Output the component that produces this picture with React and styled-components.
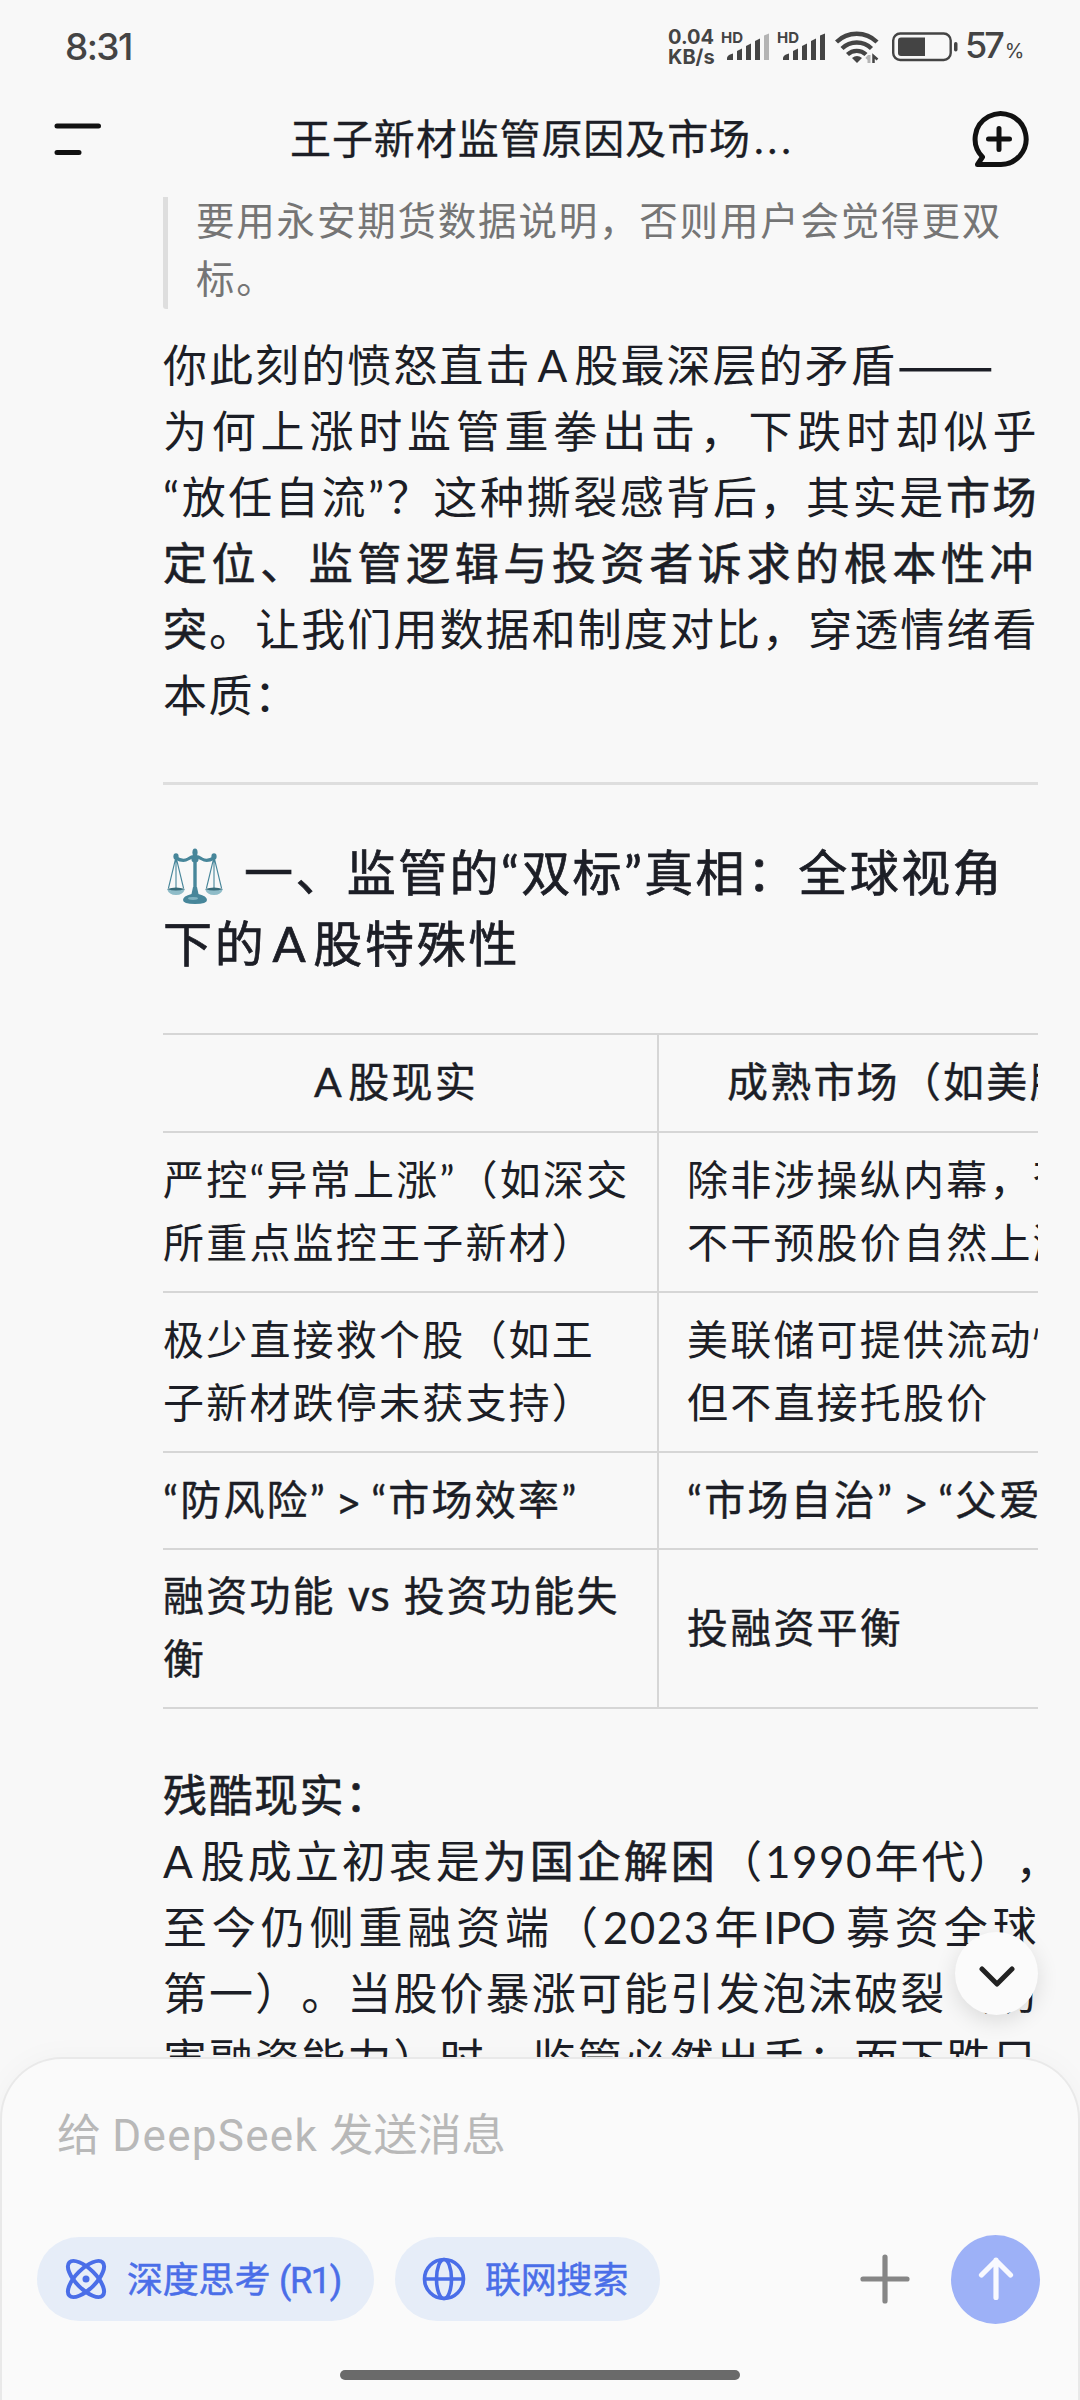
import styled, { createGlobalStyle, css } from 'styled-components';

export default function App() {
  return (
    <Screen>
      <GlobalStyle />
      <StatusBar />
      <Header />
      <Conversation />
      <Composer />
      <ScrollDown>
        <svg width="36" height="24" viewBox="0 0 36 24">
          <path d="M3 3 18 18 33 3" fill="none" stroke="#222" strokeWidth="5" strokeLinecap="round" strokeLinejoin="round" />
        </svg>
      </ScrollDown>
    </Screen>
  );
}

const StatusBar = () => (
  <StatusRow>
    <Clock>8:31</Clock>
    <StatusIcons>
      <Speed>
        <span>0.04</span>
        <span>KB/s</span>
      </Speed>
      <Signal weak />
      <Signal />
      <WifiIcon />
      <BatteryIcon />
      <Percent>
        57<small>%</small>
      </Percent>
    </StatusIcons>
  </StatusRow>
);

const Signal = ({ weak }) => (
  <SignalBox>
    <HdLabel>HD</HdLabel>
    <svg width="43" height="28" viewBox="0 0 43 28">
      <path d="M0 27V24.5Q1 21.5 6 20.5V27Z" fill="#444" />
      <path d="M10 27V18L15 15.5V27Z" fill="#444" />
      <path d="M19 27V13L24 10.5V27Z" fill="#444" />
      <path d="M28 27V8L33 5.5V27Z" fill="#444" />
      <path d="M37 27V2.5L42 .5V27Z" fill={weak ? '#b4b4b4' : '#444'} />
    </svg>
  </SignalBox>
);

const WifiIcon = () => (
  <Wifi width="44" height="34" viewBox="0 0 44 34">
    <g fill="none" stroke="#444" strokeWidth="4.4">
      <path d="M1.500 12A29 29 0 0 1 42 12" />
      <path d="M7 18.500A21 21 0 0 1 36.500 18.500" />
      <path d="M12.500 24.500A13.500 13.500 0 0 1 31 24.500" />
    </g>
    <path d="M17 28Q22 24 27 28L22 33Z" fill="#444" />
    <path d="M34 25V33M31.500 29 34 26" stroke="#b4b4b4" strokeWidth="3" />
    <path d="M38.500 33V26L42.500 29.500" fill="none" stroke="#444" strokeWidth="2.5" />
  </Wifi>
);

const BatteryIcon = () => (
  <svg width="67" height="30" viewBox="0 0 67 30">
    <rect x="1.2" y="1.5" width="57.5" height="26.5" rx="7" fill="none" stroke="#444" strokeWidth="2.4" />
    <path d="M33 5.500V24H9Q6 24 6 21V8.500Q6 5.500 9 5.500Z" fill="#444" />
    <rect x="62" y="10" width="3.5" height="9.5" rx="1.7" fill="#444" />
  </svg>
);

const Header = () => (
  <HeaderRow>
    <svg width="50" height="36" viewBox="0 0 50 36">
      <path d="M4 5H45.500M4 31.500H26" stroke="#111" strokeWidth="5" strokeLinecap="round" />
    </svg>
    <Title>
      王子新材监管原因及市场<Dots>...</Dots>
    </Title>
    <svg width="60" height="60" viewBox="0 0 60 60">
      <g fill="none" stroke="#111" strokeWidth="5" strokeLinecap="round" strokeLinejoin="round">
        <path d="M13.500 48A25.500 25.500 0 1 1 30 55.500H8.500L13.500 48Z" />
        <path d="M30 19.500V40.500M19.500 30H40.500" />
      </g>
    </svg>
  </HeaderRow>
);

const Conversation = () => (
  <Content>
    <Quote>
      <Line $w={801}>要用永安期货数据说明，否则用户会觉得更双</Line>
      <Line>标。</Line>
    </Quote>
    <Paragraph>
      <Line $w={831}>
        你此刻的愤怒直击<Latin>A</Latin>股最深层的矛盾<Dash>——</Dash>
      </Line>
      <Line $w={875}>为何上涨时监管重拳出击，下跌时却似乎</Line>
      <Line $w={875}>
        “放任自流”？这种撕裂感背后，其实是<b>市场</b>
      </Line>
      <Line $w={872}>
        <b>定位、监管逻辑与投资者诉求的根本性冲</b>
      </Line>
      <Line $w={875}>
        <b>突</b>。让我们用数据和制度对比，穿透情绪看
      </Line>
      <Line>本质：</Line>
    </Paragraph>
    <Rule />
    <Heading>
      <HeadingRow>
        <ScalesIcon />
        <Line $w={759}>一、监管的“双标”真相：全球视角</Line>
      </HeadingRow>
      <Line $w={356}>
        下的<Latin>A</Latin>股特殊性
      </Line>
    </Heading>
    <Table>
      <Row $h={98} $head>
        <Cell>
          <Line $w={164}>
            <Latin $first>A</Latin>股现实
          </Line>
        </Cell>
        <Cell>成熟市场（如美股）</Cell>
      </Row>
      <Row $h={160}>
        <Cell>
          <Line $w={464}>严控“异常上涨”（如深交</Line>
          <Line>所重点监控王子新材）</Line>
        </Cell>
        <Cell>
          <Line>除非涉操纵内幕，否则</Line>
          <Line>不干预股价自然上涨</Line>
        </Cell>
      </Row>
      <Row $h={160}>
        <Cell>
          <Line>极少直接救个股（如王</Line>
          <Line>子新材跌停未获支持）</Line>
        </Cell>
        <Cell>
          <Line>美联储可提供流动性，</Line>
          <Line>但不直接托股价</Line>
        </Cell>
      </Row>
      <Row $h={97} $strong>
        <Cell>
          <Line>
            “防风险”<Greater>&gt;</Greater>“市场效率”
          </Line>
        </Cell>
        <Cell>
          <Line>
            “市场自治”<Greater>&gt;</Greater>“父爱主义”
          </Line>
        </Cell>
      </Row>
      <Row $h={159} $strong>
        <Cell>
          <Line $w={456}>
            融资功能 <Versus>vs</Versus> 投资功能失
          </Line>
          <Line>衡</Line>
        </Cell>
        <Cell>
          <Line>投融资平衡</Line>
        </Cell>
      </Row>
    </Table>
    <Paragraph $afterTable>
      <Line>
        <b>残酷现实：</b>
      </Line>
      <Line $w={898}>
        <Latin $first>A</Latin>股成立初衷是<b>为国企解困</b>（1990年代），
      </Line>
      <Line $w={875}>
        至今仍侧重融资端（2023年<Latin $first>IPO</Latin>募资全球
      </Line>
      <Line $w={875}>第一）。当股价暴涨可能引发泡沫破裂（伤</Line>
      <Line $w={875}>害融资能力）时，监管必然出手；而下跌只</Line>
    </Paragraph>
  </Content>
);

const ScalesIcon = () => (
  <Scales width="60" height="58" viewBox="0 0 60 58">
    <g fill="none" stroke="#47869a" strokeLinecap="round">
      <path d="M11 11Q18 15 23 12Q30 7 37 12Q42 15 49 11" strokeWidth="3.2" />
      <path d="M30 8V44" strokeWidth="3.4" />
      <path d="M11 10 3.500 41M11 10V41M11 10 18.500 41M49 10 41.500 41M49 10V41M49 10 56.500 41" strokeWidth="1.1" />
    </g>
    <g fill="#47869a">
      <ellipse cx="30" cy="5.5" rx="2.6" ry="4" />
      <circle cx="30" cy="12" r="3.6" />
      <ellipse cx="11" cy="9.5" rx="2.6" ry="3.2" />
      <ellipse cx="49" cy="9.5" rx="2.6" ry="3.2" />
      <path d="M28 40H32L33.500 47Q42 49 42 53Q42 57 30 57Q18 57 18 53Q18 49 26.500 47Z" />
    </g>
    <path d="M2 42H20Q18 48 11 48Q4 48 2 42ZM40 42H58Q56 48 49 48Q42 48 40 42Z" fill="#8fbcc8" />
    <path d="M2 42Q11 39 20 42Q11 45 2 42ZM40 42Q49 39 58 42Q49 45 40 42Z" fill="#386a78" />
    <ellipse cx="28" cy="51.5" rx="5" ry="1.4" fill="#7fb2c0" />
  </Scales>
);

const Composer = () => (
  <Panel>
    <Placeholder>
      给 <em>DeepSeek</em> 发送消息
    </Placeholder>
    <Tools>
      <Chip $w={337}>
        <svg width="44" height="44" viewBox="0 0 44 44">
          <g fill="none" stroke="#4a6ee8" strokeWidth="4">
            <ellipse cx="22" cy="22" rx="10" ry="23.5" transform="rotate(45 22 22)" />
            <ellipse cx="22" cy="22" rx="10" ry="23.5" transform="rotate(-45 22 22)" />
          </g>
          <circle cx="22" cy="22" r="3.5" fill="#4a6ee8" />
        </svg>
        <span>
          深度思考 <em>(R1)</em>
        </span>
      </Chip>
      <Chip $w={265}>
        <svg width="44" height="44" viewBox="0 0 44 44">
          <g fill="none" stroke="#4a6ee8" strokeWidth="3.6">
            <circle cx="22" cy="22" r="19.5" />
            <ellipse cx="22" cy="22" rx="7.5" ry="19.5" />
            <path d="M2.500 22H41.500" />
          </g>
        </svg>
        <span>联网搜索</span>
      </Chip>
      <Attach width="50" height="50" viewBox="0 0 50 50">
        <path d="M25 3V47M3 25H47" stroke="#868686" strokeWidth="5.2" strokeLinecap="round" />
      </Attach>
      <Send>
        <svg width="40" height="46" viewBox="0 0 40 46">
          <path d="M20 41.500V4M5.500 19 20 4.500 34.500 19" fill="none" stroke="#f8f9ff" strokeWidth="5.2" strokeLinecap="round" strokeLinejoin="round" />
        </svg>
      </Send>
    </Tools>
    <HomeBar />
  </Panel>
);

const GlobalStyle = createGlobalStyle`
  body {
    margin: 0;
    background: #f8f8f8;
  }
`;

const Screen = styled.main`
  position: relative;
  display: flex;
  flex-direction: column;
  width: 1080px;
  height: 2400px;
  overflow: hidden;
  background: #f8f8f8;
  color: #1c1e26;
  font-family: Lato, 'Noto Sans CJK SC', sans-serif;
  white-space: nowrap;
  text-spacing-trim: space-all;

  svg {
    display: block;
    flex: none;
  }

  em {
    font-style: normal;
  }
`;

const StatusRow = styled.div`
  display: flex;
  align-items: center;
  justify-content: space-between;
  box-sizing: border-box;
  height: 94px;
  padding: 0 58px 0 65px;
  color: #444;
`;

const Clock = styled.div`
  font: 500 37px/94px Inter, sans-serif;
  letter-spacing: -1.6px;
`;

const StatusIcons = styled.div`
  display: flex;
  align-items: center;
`;

const Speed = styled.div`
  display: flex;
  flex-direction: column;
  width: 54px;
  font: 700 20px/20px Inter, sans-serif;
`;

const SignalBox = styled.div`
  position: relative;
  width: 46px;
  padding-left: 10px;

  svg {
    margin-left: -5px;
  }
`;

const HdLabel = styled.span`
  position: absolute;
  left: -1px;
  top: -2px;
  font: 700 15px/14px Inter, sans-serif;
`;

const Wifi = styled.svg`
  margin: 0 13px 0 1px;
`;

const Percent = styled.div`
  display: flex;
  align-items: baseline;
  width: 57px;
  margin-left: 6px;
  padding-top: 2px;
  font: 500 36px/94px Inter, sans-serif;
  letter-spacing: -3px;

  small {
    margin-left: 3px;
    font-size: 20px;
    font-weight: 400;
  }
`;

const HeaderRow = styled.header`
  display: flex;
  align-items: center;
  justify-content: space-between;
  box-sizing: border-box;
  height: 102px;
  padding: 0 51px 12px 53px;
`;

const Title = styled.h1`
  margin: 0 0 0 13px;
  font-size: 41px;
  font-weight: 400;
  line-height: 60px;
  letter-spacing: 0.9px;
  -webkit-text-stroke: 0.3px currentColor;
`;

const Dots = styled.span`
  margin-left: 3px;
  letter-spacing: 4px;
`;

const Content = styled.section`
  height: 1861px;
  padding: 0 42px 0 163px;
  overflow: hidden;

  b {
    font-weight: 400;
    -webkit-text-stroke: 0.6px currentColor;
  }
`;

const Line = styled.div`
  ${({ $w }) =>
    $w &&
    css`
      width: ${$w}px;
      text-align: justify;
      text-align-last: justify;
    `}
`;

const Latin = styled.span`
  margin: 0 7px 0 ${({ $first }) => ($first ? 0 : 6)}px;
  letter-spacing: -0.5px;
`;

const Dash = styled.span`
  font-family: 'Noto Sans CJK SC', sans-serif;
  font-size: 58px;
  line-height: 0;
  letter-spacing: 0;
  vertical-align: -4px;
`;

const Greater = styled.span`
  margin: 0 10px 0 9px;
  font-family: Inter, sans-serif;
  font-size: 38px;
  line-height: 0;
  letter-spacing: 0;
`;

const Versus = styled.span`
  font-family: 'Noto Sans', sans-serif;
  font-size: 41px;
  line-height: 0;
  letter-spacing: 1px;
`;

const Quote = styled.blockquote`
  display: flow-root;
  margin: 1px 0 0;
  padding: 0 0 0 28px;
  height: 112px;
  border-left: 5px solid #dedede;
  border-radius: 0 0 0 3px;
  color: #757575;
  font-size: 38.5px;
  line-height: 58px;
  letter-spacing: 1.8px;

  ${Line}:first-child {
    margin-top: -6px;
  }
`;

const Paragraph = styled.div`
  font-size: 44px;
  line-height: 66px;
  letter-spacing: 1.5px;
  margin-top: ${({ $afterTable }) => ($afterTable ? 53 : 23)}px;
`;

const Rule = styled.hr`
  height: 3px;
  margin: 54px 0 52px;
  border: 0;
  background: #dedede;
`;

const Heading = styled.h2`
  margin: 0;
  font-size: 49px;
  font-weight: 400;
  line-height: 71px;
  letter-spacing: 1.5px;
  -webkit-text-stroke: 0.7px currentColor;
`;

const HeadingRow = styled.div`
  display: flex;
`;

const Scales = styled.svg`
  margin: 10px 19px 0 2px;
`;

const Table = styled.div`
  width: 875px;
  margin-top: 54px;
  overflow: hidden;
  border-top: 2px solid #d6d6d6;
  font-size: 41px;
  line-height: 63px;
  letter-spacing: 2.2px;
`;

const Cell = styled.div`
  display: flex;
  flex-direction: column;
  justify-content: center;
  box-sizing: border-box;
  padding-bottom: 3px;

  & + & {
    padding-left: 28px;
    border-left: 2px solid #d6d6d6;
  }
`;

const Row = styled.div`
  display: grid;
  grid-template-columns: 494px 500px;
  box-sizing: border-box;
  height: ${({ $h }) => $h}px;
  border-bottom: 2px solid #d6d6d6;
  -webkit-text-stroke: ${({ $head, $strong }) => ($head || $strong ? 0.4 : 0)}px currentColor;

  ${({ $head }) =>
    $head &&
    css`
      ${Cell}:first-child {
        padding-left: 151px;
      }
      ${Cell} + ${Cell} {
        padding-left: 68px;
      }
    `}
`;

const Panel = styled.footer`
  display: flex;
  flex-direction: column;
  box-sizing: border-box;
  height: 343px;
  padding: 44px 38px 0 35px;
  border: 2px solid #e9e9e9;
  border-bottom: 0;
  border-radius: 62px 62px 0 0;
  background: #fafafa;
  box-shadow: 0 0 30px rgba(0, 0, 0, 0.03);
`;

const Placeholder = styled.div`
  padding-left: 20px;
  color: #b8b8b8;
  font-family: Roboto, 'Noto Sans CJK SC', sans-serif;
  font-size: 44px;
  line-height: 66px;
  letter-spacing: 0.2px;

  em {
    letter-spacing: 1.3px;
  }
`;

const Tools = styled.div`
  display: flex;
  align-items: center;
  height: 90px;
  margin-top: 65px;
`;

const Chip = styled.div`
  display: flex;
  align-items: center;
  gap: 19px;
  box-sizing: border-box;
  width: ${({ $w }) => $w}px;
  height: 84px;
  margin-right: 21px;
  padding-left: 27px;
  border-radius: 42px;
  background: #e6edf8;
  color: #4a6ee8;
  font-family: Roboto, 'Noto Sans CJK SC', sans-serif;
  font-size: 36px;
  letter-spacing: -0.2px;
  -webkit-text-stroke: 0.5px currentColor;

  span {
    margin-top: -4px;
  }

  em {
    letter-spacing: -1.3px;
  }
`;

const Attach = styled.svg`
  margin-left: auto;
`;

const Send = styled.button`
  display: flex;
  align-items: center;
  justify-content: center;
  width: 89px;
  height: 89px;
  margin-left: 41px;
  padding: 0;
  border: 0;
  border-radius: 50%;
  background: #9db1f7;
`;

const HomeBar = styled.div`
  width: 400px;
  height: 10px;
  margin: 46px 0 0 303px;
  border-radius: 5px;
  background: #6a6a6a;
`;

const ScrollDown = styled.button`
  position: absolute;
  left: 955px;
  top: 1932px;
  display: flex;
  align-items: center;
  justify-content: center;
  width: 83px;
  height: 83px;
  padding: 8px 0 0;
  border: 0;
  border-radius: 50%;
  background: #fbfbfb;
  box-shadow: 0 6px 22px rgba(0, 0, 0, 0.12);
`;
